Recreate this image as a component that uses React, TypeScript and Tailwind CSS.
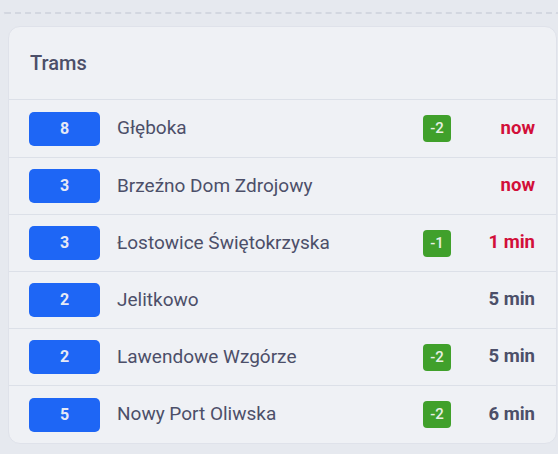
import React from "react";

const rows = [
  { line: "8", name: "Głęboka", delay: "-2", time: "now", urgent: true },
  { line: "3", name: "Brzeźno Dom Zdrojowy", delay: "", time: "now", urgent: true },
  { line: "3", name: "Łostowice Świętokrzyska", delay: "-1", time: "1 min", urgent: true },
  { line: "2", name: "Jelitkowo", delay: "", time: "5 min", urgent: false },
  { line: "2", name: "Lawendowe Wzgórze", delay: "-2", time: "5 min", urgent: false },
  { line: "5", name: "Nowy Port Oliwska", delay: "-2", time: "6 min", urgent: false },
];

export default function App() {
  return (
    <div
      className="w-[558px] h-[454px] bg-[#e6e9ef] overflow-hidden"
      style={{ fontFamily: "Roboto, 'Liberation Sans', sans-serif" }}
    >
      <div className="pt-[12px] pl-[2px] h-[26px]">
        <div className="h-[3px] border-t-2 border-l-2 border-dashed border-[#d3d7e0] rounded-tl-[8px]" />
      </div>
      <div className="ml-[8px] mr-[1px] bg-[#eff1f5] rounded-[12px] border border-[#dfe2ea] overflow-hidden">
        <div className="h-[73px] flex items-center pl-[21px] border-b border-[#dce0e8]">
          <span className="text-[20px] font-medium text-[#4c4f69]">Trams</span>
        </div>
        {rows.map((r, i) => (
          <div
            key={i}
            className={`${i === 0 ? "h-[58px]" : "h-[57px]"} flex items-center pl-[20px] pr-[21px] ${i < rows.length - 1 ? "border-b border-[#dce0e8]" : ""}`}
          >
            <div className="w-[71px] h-[34px] rounded-[5px] bg-[#1e66f5] flex items-center justify-center text-[16px] font-bold text-[#e6e9f5]">
              {r.line}
            </div>
            <div className="ml-[17px] flex-1 text-[19px] text-[#4c4f69]">{r.name}</div>
            {r.delay ? (
              <div className="w-[28px] h-[27px] rounded-[4px] bg-[#40a02b] flex items-center justify-center text-[15px] font-medium text-[#e8f0e6]">
                {r.delay}
              </div>
            ) : null}
            <div
              className={`w-[84px] text-right text-[18.5px] font-bold ${r.urgent ? "text-[#d20f39]" : "text-[#4c4f69]"}`}
            >
              {r.time}
            </div>
          </div>
        ))}
      </div>
    </div>
  );
}
